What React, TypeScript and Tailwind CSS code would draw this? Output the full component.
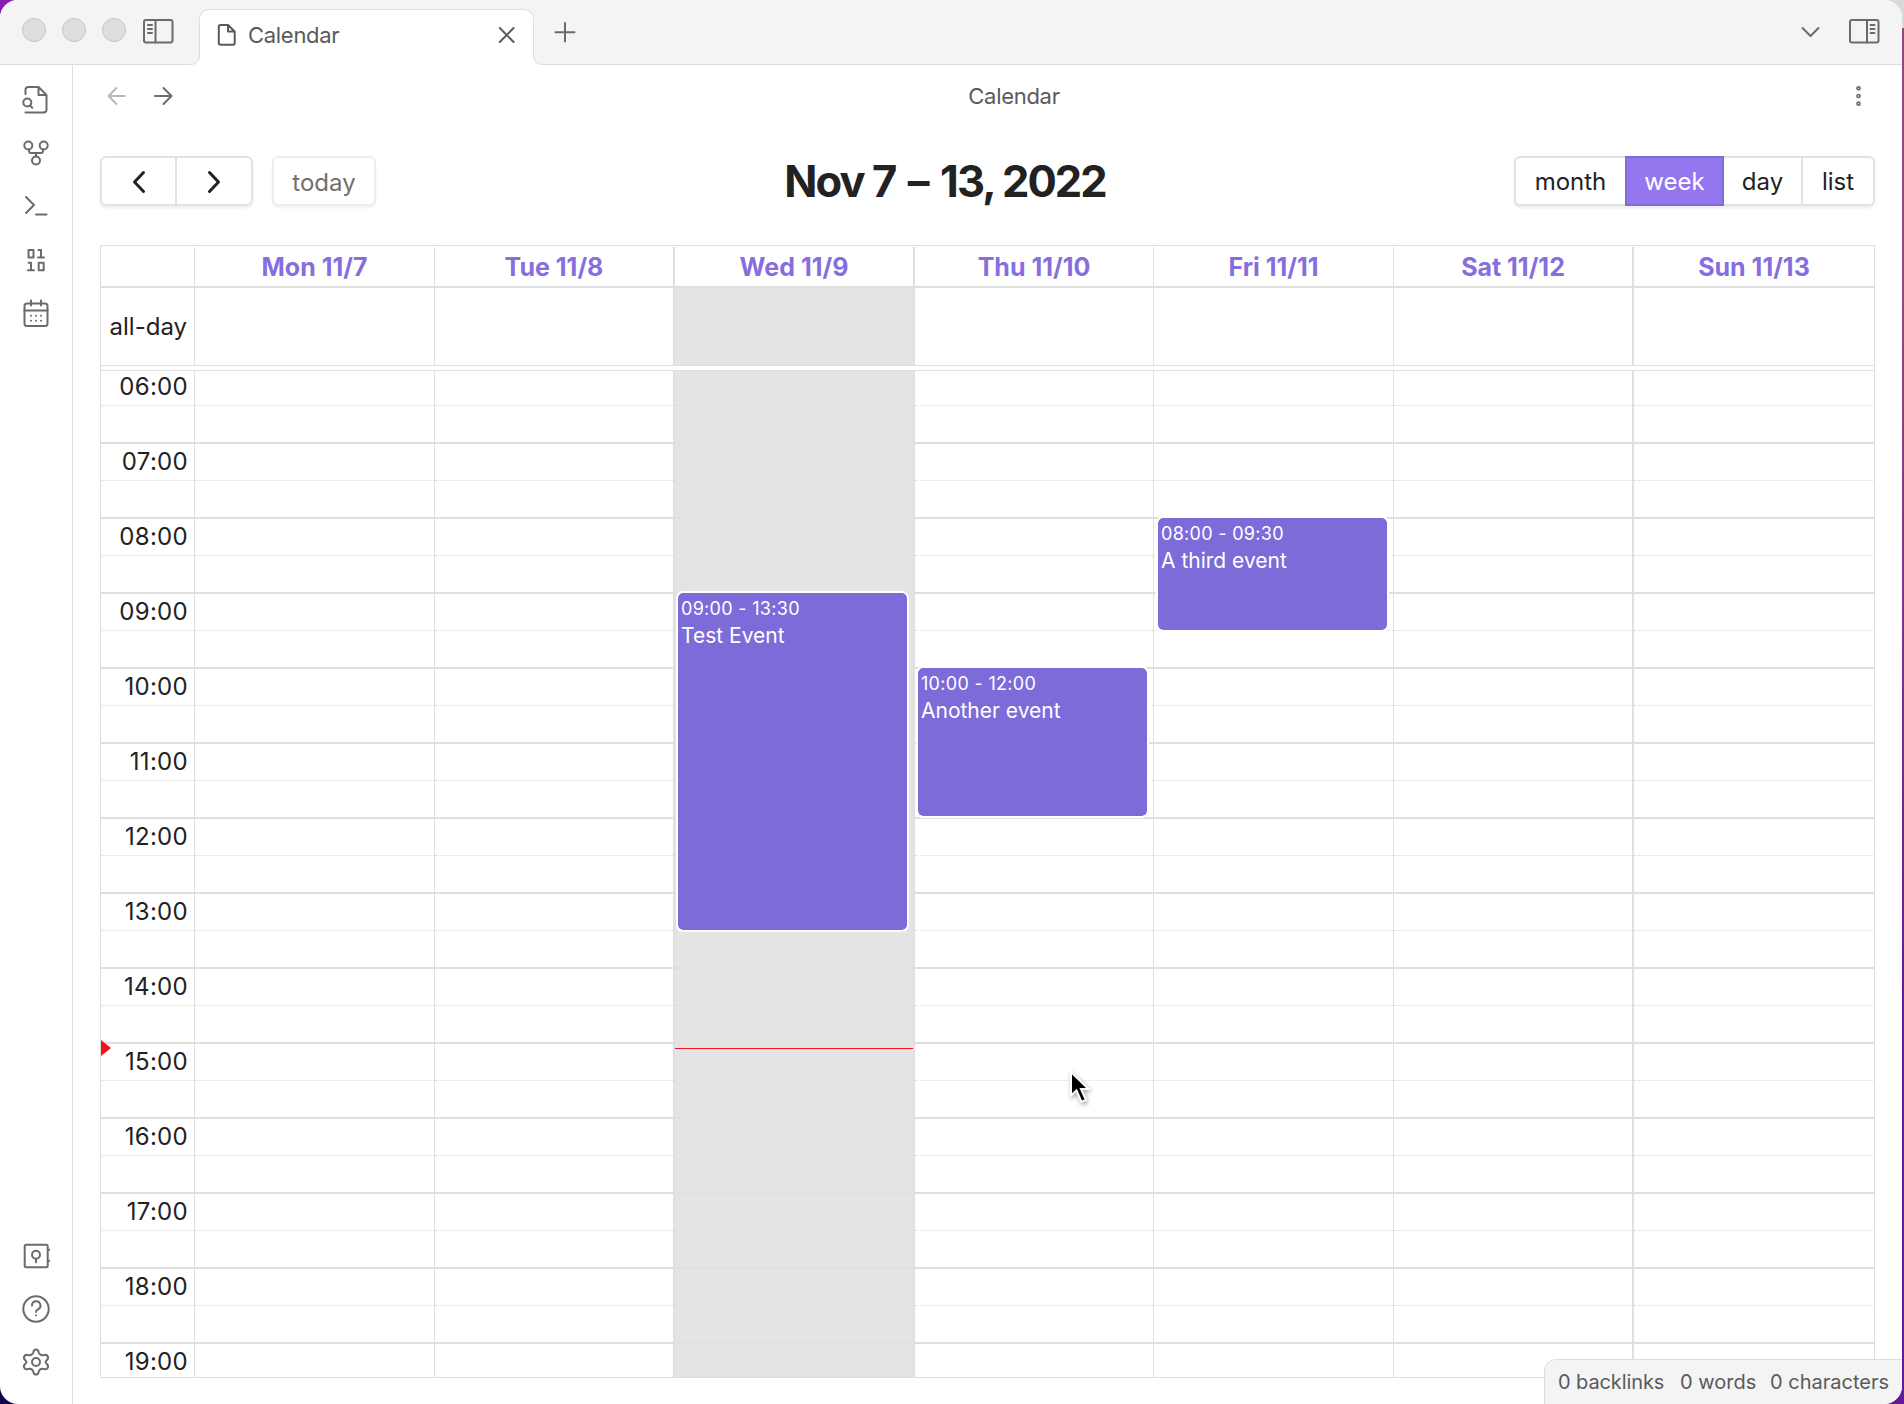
import React from "react";

const hours = ["06:00", "07:00", "08:00", "09:00", "10:00", "11:00", "12:00", "13:00", "14:00", "15:00", "16:00", "17:00", "18:00", "19:00"];

type CalEvent = { time: string; title: string; place: string };
type Day = { label: string; wide?: boolean; today?: boolean; event?: CalEvent };

const days: Day[] = [
  { label: "Mon 11/7" },
  { label: "Tue 11/8" },
  { label: "Wed 11/9", wide: true, today: true, event: { time: "09:00 - 13:30", title: "Test Event", place: "top-[226px] h-[337px] left-[3px] w-[229px]" } },
  { label: "Thu 11/10", wide: true, event: { time: "10:00 - 12:00", title: "Another event", place: "top-[301px] h-[148px] left-[3px] w-[229px]" } },
  { label: "Fri 11/11", event: { time: "08:00 - 09:30", title: "A third event", place: "top-[151px] h-[112px] left-[4px] w-[229px]" } },
  { label: "Sat 11/12" },
  { label: "Sun 11/13", wide: true },
];

const cols = "grid grid-cols-[93px_240px_239px_240px_240px_240px_239px_242px]";

function Icon({ box, className = "size-8", width = 2, children }: { box: string; className?: string; width?: number; children: React.ReactNode }) {
  return (
    <svg viewBox={box} className={`${className} shrink-0`} fill="none" stroke="currentColor" strokeWidth={width} strokeLinecap="round" strokeLinejoin="round">
      {children}
    </svg>
  );
}

function TitleBar() {
  return (
    <header className="flex h-[65px] shrink-0 border-b border-[#dedede] bg-[#f4f4f4] text-[#6b6b6b]">
      <div className="flex h-[60px] w-[199px] shrink-0 items-center gap-4 pl-[22px]">
        <i className="size-6 rounded-full border border-[#c6c6c6] bg-[#dedede]" />
        <i className="size-6 rounded-full border border-[#c6c6c6] bg-[#dedede]" />
        <i className="size-6 rounded-full border border-[#c6c6c6] bg-[#dedede]" />
        <Icon box="142 18 32 26" className="mt-[2px] h-[26px] w-8">
          <rect x="144" y="20" width="28.5" height="22.5" rx="2" />
          <path d="M155.5 20v22.5M148 25h4M148 29h4M148 33h4" />
        </Icon>
      </div>
      <div className="relative mt-[9px] flex h-14 w-[335px] shrink-0 items-center rounded-t-[10px] border border-b-0 border-[#dedede] bg-white pl-4 text-[#5a5a5a]">
        <svg className="absolute -left-[10px] bottom-0 size-[10px]" viewBox="0 0 10 10" fill="none">
          <path d="M0 10h10V0Q10 9.500 0 9.500Z" fill="#fff" />
          <path d="M0 9.500Q9.500 9.500 9.500 0" stroke="#dedede" />
        </svg>
        <svg className="absolute -right-[10px] bottom-0 size-[10px]" viewBox="0 0 10 10" fill="none">
          <path d="M10 10H0V0Q0 9.500 10 9.500Z" fill="#fff" />
          <path d="M10 9.500Q0.500 9.500 0.500 0" stroke="#dedede" />
        </svg>
        <Icon box="216 23 20 24" className="-mt-[5px] h-6 w-5">
          <path d="M228 25h-7.500q-1.700 0-1.700 1.700v16.300q0 1.700 1.700 1.700h12.500q1.700 0 1.700-1.700v-11.500zv6.500h6.500" />
        </Icon>
        <span className="-mt-[5px] ml-[12px] text-[22px] tracking-[-0.3px]">Calendar</span>
        <Icon box="497 25 20 20" className="-mt-[5px] mr-4 ml-auto size-5">
          <path d="M499.800 28l13.800 14M513.600 28l-13.800 14" />
        </Icon>
      </div>
      <Icon box="554 21 22 22" className="mt-[21px] ml-[20px] size-[22px]">
        <path d="M565 23v18.500M555.500 32.300h19" />
      </Icon>
      <Icon box="1800 24 22 16" className="mt-6 ml-auto h-4 w-[22px]">
        <path d="M1802.500 28l8 8 8-8" />
      </Icon>
      <Icon box="1848 18 32 26" className="mt-[18px] mr-[22px] ml-[26px] h-[26px] w-8">
        <rect x="1850" y="20" width="28.500" height="22.500" rx="2" />
        <path d="M1867 20v22.500M1870.500 25h4M1870.500 29h4M1870.500 33h4" />
      </Icon>
    </header>
  );
}

function Rail() {
  return (
    <nav className="flex w-[73px] shrink-0 flex-col items-center gap-[21px] border-r border-[#dedede] pt-[19px] pb-[26px] text-[#6b6b6b]">
      <Icon box="20 84 32 32">
        <path d="M25.500 94v-4q0-3 3-3h10l8 8v14.500q0 3-3 3H25.500M38.500 87v8h8" />
        <circle cx="27.300" cy="102.500" r="4" />
        <path d="M30 105.500l2.300 2.300" />
      </Icon>
      <Icon box="20 137 32 32">
        <circle cx="28.300" cy="145.500" r="4" />
        <circle cx="43.700" cy="145.500" r="4" />
        <circle cx="36" cy="160.500" r="4" />
        <path d="M29 149.500v1.500q0 2 2 2h10q2 0 2-2v-1.500M36 153v3.500" />
      </Icon>
      <Icon box="20 190 32 32">
        <path d="M26 197l8 8-8 8M36 214.500h10.500" />
      </Icon>
      <Icon box="20 243 32 32">
        <path d="M28.500 250h5v7.500h-5zM38.500 250h2.500v7.500M38 257.500h6M28.500 262.700h2.500v7.500M28 270.200h6M38.700 262.700h5v7.500h-5z" />
      </Icon>
      <Icon box="20 296 32 32">
        <rect x="24.500" y="303.500" width="23" height="22.500" rx="2.500" />
        <path d="M24.500 310.500h23M31 300.500v5M41 300.500v5" />
        <path d="M31 315.800h.01M36 315.800h.01M41 315.800h.01M31 320.800h.01M36 320.800h.01M41 320.800h.01" />
      </Icon>
      <div className="mt-auto flex flex-col gap-[21px]">
        <Icon box="20 1240 32 32">
          <rect x="24.700" y="1244.700" width="23" height="22.500" rx="1.500" />
          <circle cx="36" cy="1254.800" r="4" />
          <path d="M36 1259v3.300M48.500 1249.700h.7M48.500 1261h.7" />
        </Icon>
        <Icon box="20 1293 32 32">
          <circle cx="36" cy="1309" r="12.700" />
          <path d="M32 1305.500a4.200 4.200 0 1 1 6.300 3.600q-2.300 1.300-2.300 2.900M36 1315.200h.01" />
        </Icon>
        <Icon box="20 1346 32 32">
          <path d="M33.300 1352.500q.4-3 2.700-3t2.700 3q1.400 3.600 5.200 2.600 2.700-.8 3.800 1.200t-1 4q-2.300 1.700 0 3.500 2.100 2 1 4t-3.800 1.200q-3.800-1-5.200 2.600-.4 3-2.700 3t-2.700-3q-1.400-3.600-5.200-2.600-2.700.8-3.800-1.200t1-4q2.300-1.800 0-3.500-2.100-2-1-4t3.800-1.200q3.800 1 5.200-2.600z" />
          <circle cx="36" cy="1362" r="4" />
        </Icon>
      </div>
    </nav>
  );
}

function ViewHeader() {
  return (
    <div className="flex h-[61px] shrink-0 items-center text-[#6b6b6b]">
      <Icon box="106 86 22 20" className="ml-[33px] h-5 w-[22px] text-[#b8b8b8]">
        <path d="M125 96h-16.500M116.500 88l-8 8 8 8" />
      </Icon>
      <Icon box="153 86 22 20" className="ml-[25px] h-5 w-[22px]">
        <path d="M155 96h16.500M163.500 88l8 8-8 8" />
      </Icon>
      <span className="flex-1 pt-[2px] pl-[54px] text-center text-[22px] tracking-[-0.3px] text-[#5a5a5a]">Calendar</span>
      <Icon box="1850 84 16 24" className="mr-[36px] ml-[51px] h-6 w-4" width={1.7}>
        <circle cx="1858.500" cy="88.300" r="1.500" />
        <circle cx="1858.500" cy="96" r="1.500" />
        <circle cx="1858.500" cy="103.700" r="1.500" />
      </Icon>
    </div>
  );
}

function Toolbar() {
  return (
    <div className="mt-[30px] flex h-[50px] items-center justify-between text-2xl text-[#222]">
      <div className="flex w-[684px] gap-[19px]">
        <div className="flex h-[50px] w-[153px] rounded-md border-2 border-[#e2e2e2] shadow-[0_2px_3px_rgba(0,0,0,0.08)]">
          <button className="flex w-[75px] items-center justify-center border-r-2 border-[#e2e2e2] pt-[2px]">
            <Icon box="0 0 16 24" className="h-6 w-4" width={3}>
              <path d="M12.500 2.500L3.500 12l9 9.500" />
            </Icon>
          </button>
          <button className="flex flex-1 items-center justify-center pt-[2px]">
            <Icon box="0 0 16 24" className="h-6 w-4" width={3}>
              <path d="M3.500 2.500l9 9.500-9 9.500" />
            </Icon>
          </button>
        </div>
        <button className="h-[50px] w-[104px] rounded-md border-2 border-[#ececec] pt-[3px] text-[#6f6f6f] shadow-[0_2px_3px_rgba(0,0,0,0.05)]">today</button>
      </div>
      <h1 className="w-[322px] text-center text-[43.500px] leading-[50px] font-bold tracking-[-1.900px] whitespace-nowrap">
        Nov 7 <span className="mx-[4px]">–</span> 13, 2022
      </h1>
      <div className="flex w-[769px] justify-end">
        <div className="flex h-[50px] rounded-md shadow-[0_2px_3px_rgba(0,0,0,0.08)]">
          <button className="w-[111px] rounded-l-md border-2 border-r-0 border-[#e2e2e2] pt-[2px]">month</button>
          <button className="w-[99px] border-2 border-[#7f6cd9] bg-[#9477ef] pt-[2px] text-white">week</button>
          <button className="w-[79px] border-y-2 border-r-2 border-[#e2e2e2] pt-[2px]">day</button>
          <button className="w-[72px] rounded-r-md border-2 border-l-0 border-[#e2e2e2] pt-[2px]">list</button>
        </div>
      </div>
    </div>
  );
}

function EventCard({ event }: { event: CalEvent }) {
  return (
    <div className={`absolute ${event.place} rounded-[5px] bg-[#7c6bd8] px-[3px] pt-1 text-white outline-2 outline-white`}>
      <div className="text-lg leading-[24px] tracking-[0.300px]">{event.time}</div>
      <div className="text-[21px] leading-[30px]">{event.title}</div>
    </div>
  );
}

function DayColumn({ day }: { day: Day }) {
  return (
    <div className={`relative border-[#dfdfdf] ${day.wide ? "border-l-2" : "border-l"} ${day.today ? "bg-[#e4e4e4]" : ""}`}>
      {hours.map((h) => (
        <div key={h} className={`h-[75px] border-t-2 ${day.today ? "border-[#e1e1e1]" : "border-[#dfdfdf]"}`}>
          <div className={`h-[37px] border-b border-dotted ${day.today ? "border-[#e1e1e1]" : "border-[#dcdcdc]"}`} />
        </div>
      ))}
      {day.event && <EventCard event={day.event} />}
      {day.today && <div className="absolute inset-x-0 top-[681px] h-px bg-[#f5101a]" />}
    </div>
  );
}

function WeekGrid() {
  return (
    <section className="mt-[39px] flex h-[1133px] w-[1775px] flex-col border border-[#dfdfdf] text-2xl text-[#222]">
      <div className={`${cols} h-[42px] shrink-0 border-b-2 border-[#dfdfdf] pt-px`}>
        <div />
        {days.map((d) => (
          <div key={d.label} className={`h-[39px] border-[#dfdfdf] text-center text-[25px] leading-[40px] font-bold text-[#866edf] ${d.wide ? "border-l-2" : "border-l"}`}>
            {d.label}
          </div>
        ))}
      </div>
      <div className={`${cols} h-[76px] shrink-0`}>
        <div className="pr-[7px] text-right leading-[77px]">all-day</div>
        {days.map((d) => (
          <div key={d.label} className={`border-[#dfdfdf] ${d.wide ? "border-l-2" : "border-l"} ${d.today ? "bg-[#e4e4e4]" : ""}`} />
        ))}
      </div>
      <div className="mt-px h-[6px] shrink-0 border-y border-[#dfdfdf]" />
      <div className="relative min-h-0 flex-1 overflow-hidden">
        <div className={`${cols} -mt-1`}>
          <div>
            {hours.map((h) => (
              <div key={h} className="h-[75px] border-t-2 border-[#dfdfdf]">
                <div className="h-[37px] border-b border-dotted border-[#dcdcdc] pr-[6px] text-right leading-[35px] tracking-[0.300px]">{h}</div>
              </div>
            ))}
          </div>
          {days.map((d) => (
            <DayColumn key={d.label} day={d} />
          ))}
        </div>
        <svg className="absolute top-[669px] left-0 h-4 w-[10px]" viewBox="0 0 10 16">
          <path d="M0 0L10 8L0 16Z" fill="#f5101a" />
        </svg>
      </div>
    </section>
  );
}

export default function App() {
  return (
    <div className="h-[1404px] w-[1904px] overflow-hidden bg-[linear-gradient(180deg,#d9d9d9_0_28px,#8f4a7c_28px,#8f4a7c_300px,#641a9c_1000px)] font-['Inter',sans-serif]">
      <div className="h-full w-full bg-[linear-gradient(180deg,#8a1db0_0_50px,#14054f_1300px)] bg-[length:60px_1404px] bg-no-repeat">
        <div className="relative flex h-[1404px] w-[1902px] flex-col overflow-hidden rounded-[18px] bg-white">
          <TitleBar />
          <div className="flex min-h-0 flex-1">
            <Rail />
            <main className="flex min-w-0 flex-1 flex-col">
              <ViewHeader />
              <div className="ml-[27px] w-[1775px]">
                <Toolbar />
                <WeekGrid />
              </div>
            </main>
          </div>
          <footer className="absolute right-0 bottom-0 flex h-[45px] w-[358px] items-center justify-between rounded-tl-xl border-t border-l border-[#dedede] bg-[#f4f4f4] pr-[13px] pl-[13px] text-[20px] whitespace-nowrap text-[#5a5a5a]">
            <span className="tracking-[-0.100px]">0 backlinks</span>
            <span className="pl-[2px]">0 words</span>
            <span>0 characters</span>
          </footer>
          <svg className="absolute top-[1067px] left-[1066px] h-[42px] w-[30px] drop-shadow-[1px_2px_2px_rgba(0,0,0,0.35)]" viewBox="0 0 30 42">
            <path d="M5 5v23.500l5.500-5 5 11.500 4.500-2-5-11h7.500z" fill="#000" stroke="#fff" strokeWidth="2" />
          </svg>
        </div>
      </div>
    </div>
  );
}
